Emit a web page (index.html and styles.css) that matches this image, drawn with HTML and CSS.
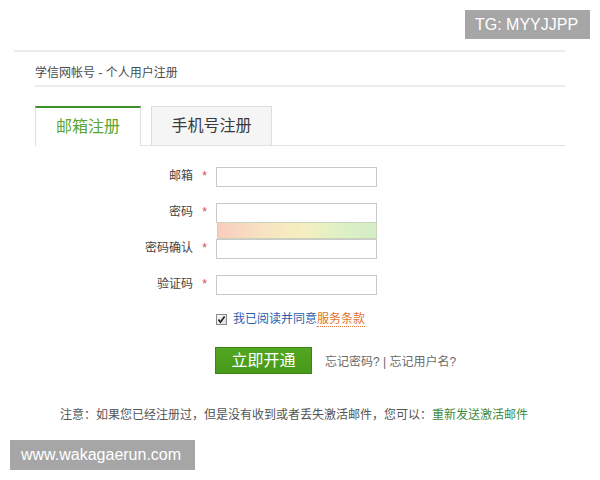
FILE: index.html
```html
<!DOCTYPE html>
<html lang="zh-CN">
<head>
<meta charset="utf-8">
<title>学信网帐号 - 个人用户注册</title>
<link rel="stylesheet" href="styles.css">
</head>
<body>
<div class="badge badge-tg">TG: MYYJJPP</div>
<div class="page">
  <div class="panel">
    <div class="crumb">学信网帐号 - 个人用户注册</div>
    <div class="tabs">
      <div class="tab tab-active">邮箱注册</div>
      <div class="tab">手机号注册</div>
    </div>
    <form class="form">
      <div class="row">
        <label class="lbl">邮箱</label><span class="req">*</span>
        <span class="field"><input class="inp" type="text"></span>
      </div>
      <div class="row">
        <label class="lbl">密码</label><span class="req">*</span>
        <span class="field"><input class="inp" type="password"><span class="strength"></span></span>
      </div>
      <div class="row">
        <label class="lbl">密码确认</label><span class="req">*</span>
        <span class="field"><input class="inp" type="password"></span>
      </div>
      <div class="row">
        <label class="lbl">验证码</label><span class="req">*</span>
        <span class="field"><input class="inp" type="text"></span>
      </div>
      <div class="agree">
        <span class="check"><svg width="11" height="11" viewBox="0 0 11 11"><defs><linearGradient id="cg" x1="0" y1="0" x2="1" y2="1"><stop offset="0" stop-color="#fafafa"/><stop offset="1" stop-color="#dcdcdc"/></linearGradient></defs><rect x="0.5" y="0.5" width="10" height="10" fill="url(#cg)" stroke="#8a8a8a"/><path d="M2.4 5.6 L4.4 8.2 L8.6 2.4" fill="none" stroke="#222" stroke-width="1.7"/></svg></span>
        <span class="agree-text">我已阅读并同意</span><span class="terms">服务条款</span>
      </div>
      <div class="actions">
        <span class="btn">立即开通</span>
        <span class="forgot">忘记密码? | 忘记用户名?</span>
      </div>
    </form>
    <div class="note">注意：如果您已经注册过，但是没有收到或者丢失激活邮件，您可以：<span class="note-link">重新发送激活邮件</span></div>
  </div>
</div>
<div class="badge badge-site">www.wakagaerun.com</div>
</body>
</html>
```
FILE: styles.css
```css
body {
  margin: 0;
  background: #fff;
  font-family: "Liberation Sans", "Noto Sans CJK SC", sans-serif;
  color: #333;
}

.badge {
  position: absolute;
  background: #a6a6a6;
  color: #fff;
  font-size: 16px;
  box-sizing: border-box;
}
.badge-tg {
  left: 465px;
  top: 10px;
  width: 125px;
  height: 29px;
  line-height: 29px;
  padding-left: 10px;
}
.badge-site {
  left: 10px;
  top: 440px;
  width: 185px;
  height: 30px;
  line-height: 30px;
  padding-left: 11px;
}

.page {
  margin: 50px 0 0 14px;
  width: 551px;
  border-top: 2px solid #ececec;
}
.panel {
  margin-left: 21px;
}
.crumb {
  padding: 13px 0 4px;
  line-height: 16px;
  font-size: 12px;
  color: #4a4a4a;
  border-bottom: 2px solid #ececec;
}

.tabs {
  margin-top: 19px;
  display: flex;
  align-items: flex-start;
  border-bottom: 1px solid #e2e2e2;
}
.tab {
  box-sizing: border-box;
  height: 39px;
  line-height: 38px;
  font-size: 16px;
  text-align: center;
  color: #3a3a3a;
  background: #f5f5f5;
  border: 1px solid #dedede;
  border-bottom: 0;
  width: 121px;
  margin-left: 10px;
}
.tab-active {
  width: 106px;
  height: 40px;
  margin-left: 0;
  margin-bottom: -1px;
  background: #fff;
  color: #5aa530;
  border-top: 2px solid #3d8f2a;
}

.form {
  margin: 21px 0 0;
}
.row {
  display: flex;
  align-items: center;
  height: 20px;
  margin-bottom: 16px;
}
.lbl {
  width: 158px;
  text-align: right;
  font-size: 12px;
  line-height: 18px;
  align-self: flex-start;
  color: #444;
}
.req {
  width: 23px;
  text-align: center;
  font-size: 12px;
  color: #d24a4a;
  line-height: 18px;
  align-self: flex-start;
}
.field {
  position: relative;
  display: block;
  width: 161px;
  height: 20px;
}
.inp {
  display: block;
  box-sizing: border-box;
  width: 161px;
  height: 20px;
  margin: 0;
  padding: 0 3px;
  border: 1px solid #c9c9c9;
  background: #fff;
  font-size: 12px;
}
.strength {
  position: absolute;
  left: 1px;
  top: 19px;
  width: 160px;
  height: 17px;
  box-sizing: border-box;
  border: 1px solid #c8d5bb;
  background: linear-gradient(to right, #f8cdbd 0%, #f7e4c2 30%, #f4efc0 55%, #dcf0c6 80%, #d3edc6 100%);
}

.agree {
  display: flex;
  align-items: center;
  margin-left: 181px;
  height: 16px;
  font-size: 12px;
  line-height: 16px;
}
.check {
  display: block;
  width: 11px;
  height: 11px;
  margin-right: 6px;
}
.check svg {
  display: block;
}
.agree-text {
  color: #2c5ead;
}
.terms {
  color: #e4732f;
  border-bottom: 1px dotted #e4732f;
  line-height: 14px;
}

.actions {
  display: flex;
  align-items: center;
  margin: 20px 0 0 180px;
}
.btn {
  display: block;
  box-sizing: border-box;
  width: 97px;
  height: 27px;
  line-height: 25px;
  text-align: center;
  font-size: 16px;
  color: #fff;
  background: linear-gradient(#53a622, #479a18);
  border: 1px solid #3a8513;
}
.forgot {
  margin-left: 13px;
  font-size: 12px;
  color: #6a6a6a;
}

.note {
  margin-top: 34px;
  padding-left: 25px;
  font-size: 12px;
  line-height: 14px;
  color: #555;
}
.note-link {
  color: #3d8b3d;
}
```
